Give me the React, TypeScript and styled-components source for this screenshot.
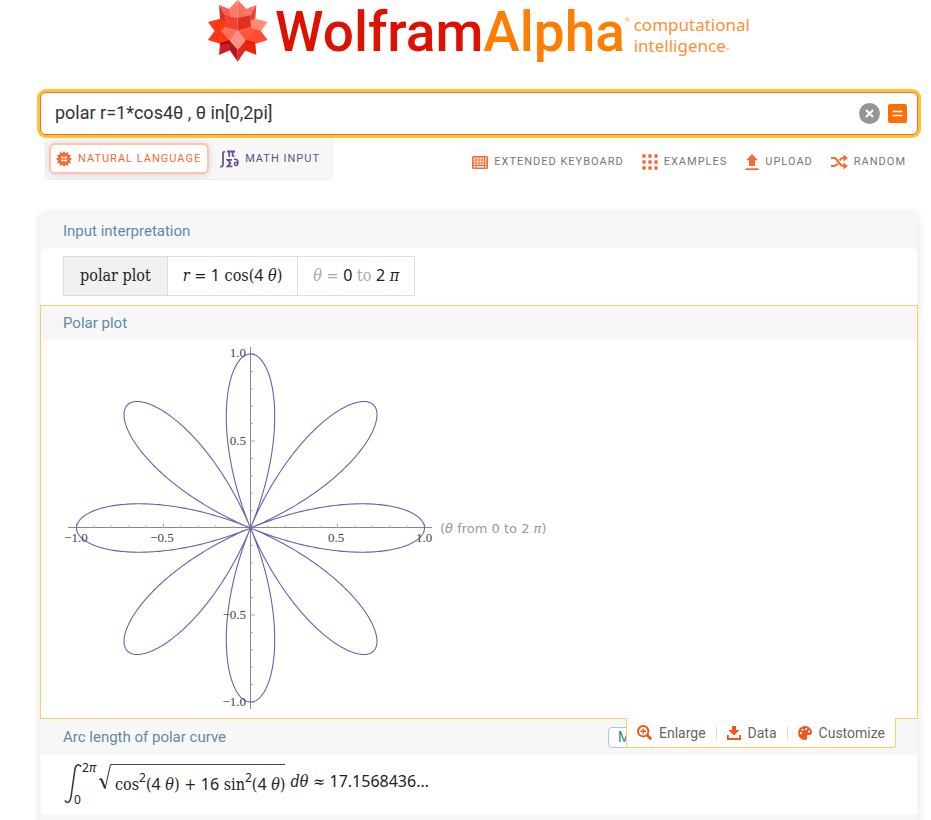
import React from 'react';
import styled, { createGlobalStyle, css } from 'styled-components';

const Global = createGlobalStyle`
  *, *::before, *::after { box-sizing: border-box; }
  body { margin: 0; background: #fff; font-family: Roboto, "Liberation Sans", sans-serif; color: #333; overflow-x: hidden; }
  button, input { font: inherit; color: inherit; }
  button { border: 0; background: none; padding: 0; margin: 0; cursor: pointer; }
  svg { display: block; flex: none; }
`;

const Page = styled.div`
  padding: 0 13px 0 40px;
`;

const Logo = styled.a`
  display: flex;
  justify-content: center;
  align-items: flex-start;
  height: 92px;
  text-decoration: none;
`;

const Wordmark = styled.span`
  display: flex;
  margin-left: 7px;
  color: #dd1100;
  font-size: 55px;
  line-height: 64px;
  font-weight: 500;
`;

const Alpha = styled.span`
  color: #ff7e00;
`;

const Registered = styled.sup`
  margin-top: 16px;
  font-size: 6px;
  line-height: 8px;
  font-weight: 400;
  color: #ff9640;
`;

const Tagline = styled.span`
  margin: 14px 0 0 4px;
  font: 17px/21px "Noto Sans", sans-serif;
  color: #ff8f33;
`;

const Trade = styled.small`
  font-size: 5px;
`;

const SearchBox = styled.form`
  display: flex;
  align-items: center;
  gap: 8px;
  height: 43px;
  padding: 0 10px 0 14px;
  border: 1px solid #f96932;
  border-radius: 6px;
  box-shadow: 0 0 0 3px #ffc230;
  background: #fff;
`;

const Query = styled.input`
  flex: 1;
  min-width: 0;
  height: 36px;
  padding: 0 0 2px;
  border: 0;
  outline: 0;
  background: transparent;
  font-size: 18px;
  color: #333;
`;

const Tools = styled.div`
  display: flex;
  justify-content: space-between;
  padding: 3px 12px 0 5px;
`;

const Modes = styled.div`
  display: flex;
  gap: 4px;
  height: 42px;
  padding: 5px 4px 6px 3px;
  background: #f7f7f7;
  border: 1px solid #efefef;
  border-top: 0;
  border-radius: 0 0 4px 4px;
`;

const label = css`
  font-size: 11px;
  line-height: 14px;
  letter-spacing: 1px;
  text-transform: uppercase;
  white-space: nowrap;
`;

const Mode = styled.button<{ $active?: boolean }>`
  ${label}
  display: flex;
  align-items: center;
  gap: 6px;
  height: 31px;
  padding: 0 6px 0 5px;
  border: 2px solid ${p => (p.$active ? '#fdc3ad' : 'transparent')};
  border-radius: 6px;
  background: ${p => (p.$active ? '#fff' : 'transparent')};
  color: ${p => (p.$active ? '#f96932' : '#5e5086')};
  box-shadow: ${p => (p.$active ? '0 1px 6px rgba(0,0,0,.15)' : 'none')};
`;

const Links = styled.nav`
  display: flex;
  align-items: center;
  gap: 18px;
  height: 48px;
`;

const ToolLink = styled.a`
  ${label}
  display: flex;
  align-items: center;
  gap: 6px;
  color: #777;
  text-decoration: none;
`;

const Results = styled.main`
  margin-top: 28px;
  border-radius: 6px;
  background: #f7f7f7;
  box-shadow: 0 0 8px rgba(0, 0, 0, 0.12);
`;

const Pod = styled.section<{ $selected?: boolean }>`
  position: relative;
  border: 1px solid ${p => (p.$selected ? '#ffcc66' : 'transparent')};
  border-width: ${p => (p.$selected ? '1px' : '0 1px')};
`;

const PodHead = styled.header`
  display: flex;
  align-items: center;
  justify-content: space-between;
  height: 34px;
  padding: 0 22px;
`;

const ResultHead = styled(PodHead)`
  height: 36px;
`;

const PodTitle = styled.h2`
  margin: 0;
  font-size: 15px;
  line-height: 20px;
  font-weight: 400;
  color: #5f8ba0;
`;

const PodBody = styled.div`
  background: #fff;
  border-radius: 6px 6px 0 0;
  padding: 8px 22px 9px;
`;

const PlotBody = styled(PodBody)`
  display: flex;
  align-items: center;
  gap: 7px;
  height: 378px;
  padding: 0 22px;
`;

const mathFont = css`
  font-family: "DejaVu Serif Condensed", "Liberation Serif", serif;
  font-size: 16px;
  line-height: 20px;
  color: #222;
  white-space: nowrap;
`;

const Interpretation = styled.table`
  ${mathFont}
  border-collapse: collapse;
`;

const Cell = styled.td<{ $shaded?: boolean }>`
  height: 39px;
  padding: 0 ${p => (p.$shaded ? '16px' : '15px')};
  border: 1px solid #ddd;
  background: ${p => (p.$shaded ? '#f1f1f1' : '#fff')};
`;

const Muted = styled.span`
  color: #aaa;
`;

const Num = styled.span`
  font-family: "Noto Sans", sans-serif;
  line-height: 1;
`;

const Caption = styled.p`
  margin: 0;
  font: 13px/20px "DejaVu Sans", sans-serif;
  color: #999;
`;

const Actions = styled.div`
  position: absolute;
  z-index: 2;
  right: 21px;
  top: 100%;
  display: flex;
  align-items: center;
  height: 30px;
  border: 1px solid #ffcc66;
  border-top: 0;
  background: #fff;
  border-radius: 0 0 3px 3px;
`;

const Action = styled.button`
  display: flex;
  align-items: center;
  gap: 7px;
  height: 14px;
  padding: 0 10px;
  font-size: 14px;
  line-height: 14px;
  color: #666;
  & + & { border-left: 1px solid #ddd; }
`;

const More = styled.button`
  width: 26px;
  height: 21px;
  margin-right: 261px;
  padding: 0 9px;
  border: 1px solid #a9cbd6;
  border-radius: 4px;
  background: #fff;
  color: #2f7f9c;
  font-size: 14px;
  line-height: 18px;
  text-align: left;
`;

const Formula = styled.div`
  ${mathFont}
  display: flex;
  height: 59px;
  background: #fff;
  padding: 8px 22px 0;
`;

const Limits = styled.span`
  display: flex;
  flex-direction: column;
  justify-content: space-between;
  height: 44px;
  margin: -1px 3px 0 -9px;
  font: 12px/12px "Noto Sans", sans-serif;
`;

const Upper = styled.span`
  margin-left: 8px;
`;

const Radicand = styled.span`
  height: 28px;
  margin: 1px 5px 0 0;
  padding: 7px 0 0 3px;
  border-top: 1px solid #444;
`;

const Rest = styled.span`
  padding-top: 9px;
`;

const Power = styled.sup`
  font: 12px/1 "Noto Sans", sans-serif;
  vertical-align: 8px;
`;

const Filler = styled.div`
  height: 36px;
`;

const BURST = Array.from({ length: 24 }, (_, i) => {
  const a = (i * Math.PI) / 12;
  const r = i % 2 ? 6 : 8;
  return `${8 + r * Math.sin(a)},${8 - r * Math.cos(a)}`;
}).join(' ');

const Spikey = () => (
  <svg width="60" height="62" viewBox="0 0 180 186" aria-hidden="true">
    <polygon fill="#ff7c6b" points="89,0 62,28 66,48 89,56" />
    <polygon fill="#fb6f5f" points="89,0 116,28 112,48 89,56" />
    <polygon fill="#f4614f" points="33,15 64,27 68,51 52,47" />
    <polygon fill="#d6302a" points="33,15 52,47 50,82 38,76 36,54" />
    <polygon fill="#ff7766" points="145,15 114,27 110,51 126,47" />
    <polygon fill="#e2443a" points="145,15 126,47 128,82 140,76 142,54" />
    <polygon fill="#ff3912" points="0,66 37,56 50,62 50,84 38,94 20,93" />
    <polygon fill="#ff8a78" points="179,66 141,56 128,62 128,84 140,94 159,93" />
    <polygon fill="#f4402f" points="52,46 89,54 89,92 49,82" />
    <polygon fill="#e2301f" points="126,46 89,54 89,92 129,82" />
    <polygon fill="#ff3613" points="0,120 20,92 40,88 70,122 36,131" />
    <polygon fill="#ff4b35" points="179,120 158,92 138,88 108,122 142,131" />
    <polygon fill="#ff7059" points="38,90 51,81 89,91 66,125" />
    <polygon fill="#ff563f" points="140,90 127,81 89,91 112,125" />
    <polygon fill="#a80d19" points="36,129 66,120 76,136 35,137" />
    <polygon fill="#d31b28" points="36,134 74,130 68,150 33,165" />
    <polygon fill="#c6141c" points="142,128 112,120 100,136 110,144" />
    <polygon fill="#ea2409" points="142,130 110,124 108,150 145,165" />
    <polygon fill="#b9131f" points="66,122 89,148 89,185 65,150" />
    <polygon fill="#df2a22" points="112,122 89,148 89,185 113,150" />
    <polygon fill="#ff9382" points="89,90 113,122 89,149 65,122" />
  </svg>
);

const Burst = () => (
  <svg width="16" height="16" viewBox="0 0 16 16" aria-hidden="true">
    <polygon points={BURST} fill="#f96932" />
    <path d="M5 6.5h6M5 9.5h6" stroke="#fff" strokeWidth="1.3" />
  </svg>
);

const MathIcon = () => (
  <svg width="19" height="18" viewBox="0 0 19 18" fill="none" stroke="#6a4f93" strokeWidth="1.8" aria-hidden="true">
    <path d="M5 2C3.400 1.400 3 2.400 3 4.400v9c0 2.400-.6 3.600-2.800 3" />
    <path d="M7 1.500h8M9.200 1.500v5.200M12.600 1.500v3.600q0 1.400 1.800.9" />
    <path d="M12 9.800H7.600l2.800 3.300-2.800 3.300H12.400" />
    <path d="M14 9.300c3-.4 4 1 4 2.900s-.9 3.400-2.300 3.400-2-3.200.2-3.400q1.200 0 1.800.8" strokeWidth="1.5" />
  </svg>
);

const Keyboard = () => (
  <svg width="16" height="13" viewBox="0 0 16 13" aria-hidden="true">
    <rect width="16" height="13" rx="1.5" fill="#f96932" />
    <path fill="#fff" d="M1.500 1.500h2v2h-2zM4.500 1.500h2v2h-2zM7.500 1.500h2v2h-2zM10.500 1.500h1.500v2h-1.500zM13 1.500h1.500v2H13zM1.500 4.500h2v2h-2zM4.500 4.500h2v2h-2zM7.500 4.500h2v2h-2zM10.500 4.500h1.500v2h-1.500zM13 4.500h1.500v2H13zM1.500 7.500h2v1.500h-2zM4.500 7.500h2v1.500h-2zM7.500 7.500h2v1.500h-2zM10.500 7.500h1.500v1.500h-1.500zM13 7.500h1.500v1.500H13zM1.500 10h2v1.500h-2zM4.500 10H12v1.500H4.500zM13 10h1.500v1.500H13z" />
  </svg>
);

const Dots = () => (
  <svg width="16" height="16" viewBox="0 0 16 16" fill="#f96932" aria-hidden="true">
    {[2, 8, 14].map(y => [2, 8, 14].map(x => <circle key={`${x}-${y}`} cx={x} cy={y} r="1.9" />))}
  </svg>
);

const Upload = () => (
  <svg width="14" height="17" viewBox="0 0 14 17" fill="#f96932" aria-hidden="true">
    <path d="M7 0l5.800 6.200H10V12H4V6.200H1.200zM.5 14.300h13v1.700H.5z" />
  </svg>
);

const Shuffle = () => (
  <svg width="17" height="14" viewBox="0 0 17 14" fill="none" stroke="#f96932" strokeWidth="2.2" aria-hidden="true">
    <path d="M0 3h3.200c3.600 0 4.600 8 9 8H14M0 11h3.200c1.400 0 2.400-1 3.200-2.400M8.600 5.400C9.600 3.800 10.600 3 12.200 3H14" />
    <path d="M12.400-.4L17 3l-4.600 3.400zM12.400 7.600L17 11l-4.600 3.400z" fill="#f96932" stroke="none" />
  </svg>
);

const Clear = () => (
  <svg width="21" height="21" viewBox="0 0 21 21" aria-hidden="true">
    <circle cx="10.5" cy="10.5" r="10.5" fill="#959595" />
    <path d="M7 7l7 7M14 7l-7 7" stroke="#fff" strokeWidth="2" />
  </svg>
);

const Equals = () => (
  <svg width="19" height="19" viewBox="0 0 19 19" aria-hidden="true">
    <rect width="19" height="19" rx="2" fill="#ff6d00" />
    <path d="M4.500 7.500h10M4.500 11.500h10" stroke="#fff" strokeWidth="1.5" />
  </svg>
);

const EnlargeIcon = () => (
  <svg width="15" height="15" viewBox="0 0 15 15" fill="none" stroke="#f0561d" aria-hidden="true">
    <circle cx="6.2" cy="6.2" r="5.2" strokeWidth="1.9" />
    <path d="M6.200 3.400v5.600M3.400 6.200h5.600" strokeWidth="1.4" />
    <path d="M10 10l4.200 4.200" strokeWidth="2.8" />
  </svg>
);

const DownloadIcon = () => (
  <svg width="14" height="14" viewBox="0 0 14 14" fill="#f0561d" aria-hidden="true">
    <path d="M5 0h4v4h3.500L7 9.400 1.500 4H5zM0 9h1.800v3h10.400V9H14v5H0z" />
  </svg>
);

const PaletteIcon = () => (
  <svg width="14" height="14" viewBox="0 0 14 14" aria-hidden="true">
    <path fill="#f0561d" d="M7 0a7 7 0 0 1 7 6.500c0 2-1.500 2.500-3 2.500-2.500 0-2 1-1.800 2.300C9.400 13 8.500 14 7 14A7 7 0 0 1 7 0z" />
    <g fill="#fff">
      <circle cx="3" cy="7.2" r="1.1" />
      <circle cx="4.6" cy="3.8" r="1.1" />
      <circle cx="8.2" cy="3" r="1.1" />
      <circle cx="11" cy="5.7" r="1.1" />
    </g>
  </svg>
);

const CX = 187.5;
const CY = 188;
const R = 174;
const rose = Array.from({ length: 1441 }, (_, i) => {
  const t = (i * Math.PI) / 720;
  const r = R * Math.cos(4 * t);
  return `${(CX + r * Math.cos(t)).toFixed(2)},${(CY - r * Math.sin(t)).toFixed(2)}`;
}).join(' ');
const ticks = Array.from({ length: 21 }, (_, i) => i - 10).filter(i => i !== 0);

const Plot = () => (
  <svg width="370" height="378" viewBox="0 0 370 378" role="img" aria-label="Polar plot of r = cos 4θ">
    <g stroke="#888" strokeWidth="1" fill="none">
      <path d={`M5 ${CY - 0.5}H369M${CX} 7V369`} />
      {ticks.map(i => {
        const l = i % 5 ? 2.5 : 4.5;
        return <path key={i} stroke="#aaa" d={`M${CX + (i * R) / 10} ${CY}v${-l}M${CX} ${CY - (i * R) / 10}h${l}`} />;
      })}
    </g>
    <polyline points={rose} fill="none" stroke="#6661b6" strokeWidth="1.1" />
    <g fontFamily="Liberation Serif, serif" fontSize="13" fill="#444">
      <g textAnchor="middle">
        <text x="13" y="202">−1.0</text>
        <text x="99" y="202">−0.5</text>
        <text x="273" y="202">0.5</text>
        <text x="361" y="202">1.0</text>
      </g>
      <g textAnchor="end">
        <text x="183" y="17">1.0</text>
        <text x="183" y="105">0.5</text>
        <text x="183" y="279">−0.5</text>
        <text x="183" y="366">−1.0</text>
      </g>
    </g>
  </svg>
);

const Integral = () => (
  <svg width="20" height="42" viewBox="0 0 20 42" fill="none" stroke="#333" strokeWidth="1.5" aria-hidden="true">
    <path d="M18 3.500C16 1 13 1 12 6L8 34c-1 6-3.500 6.500-6 4" />
    <circle cx="17.5" cy="3.2" r=".8" fill="#333" stroke="none" />
    <circle cx="2.4" cy="38" r=".8" fill="#333" stroke="none" />
  </svg>
);

const Radical = () => (
  <svg width="13" height="28" viewBox="0 0 13 28" fill="none" stroke="#333" aria-hidden="true">
    <path d="M0 17l2-1.500" strokeWidth="1" />
    <path d="M2 15.500l4 9.500" strokeWidth="2" />
    <path d="M6 26L11.500 1.500H13" strokeWidth="1" />
  </svg>
);

export default function App() {
  return (
    <>
      <Global />
      <Page>
        <Logo href="#" aria-label="WolframAlpha computational intelligence">
          <Spikey />
          <Wordmark>Wolfram<Alpha>Alpha</Alpha><Registered>®</Registered></Wordmark>
          <Tagline>computational<br />intelligence<Trade>™</Trade></Tagline>
        </Logo>
        <SearchBox onSubmit={e => e.preventDefault()}>
          <Query aria-label="Query" defaultValue="polar r=1*cos4θ , θ in[0,2pi]" />
          <button type="button" aria-label="Clear"><Clear /></button>
          <button type="submit" aria-label="Compute"><Equals /></button>
        </SearchBox>
        <Tools>
          <Modes>
            <Mode type="button" $active><Burst />Natural Language</Mode>
            <Mode type="button"><MathIcon />Math Input</Mode>
          </Modes>
          <Links>
            <ToolLink href="#"><Keyboard />Extended Keyboard</ToolLink>
            <ToolLink href="#"><Dots />Examples</ToolLink>
            <ToolLink href="#"><Upload />Upload</ToolLink>
            <ToolLink href="#"><Shuffle />Random</ToolLink>
          </Links>
        </Tools>
        <Results>
          <Pod>
            <PodHead><PodTitle>Input interpretation</PodTitle></PodHead>
            <PodBody>
              <Interpretation>
                <tbody>
                  <tr>
                    <Cell $shaded>polar plot</Cell>
                    <Cell><i>r</i> = <Num>1</Num> cos(<Num>4</Num> <i>θ</i>)</Cell>
                    <Cell><Muted><i>θ</i> =</Muted> <Num>0</Num> <Muted>to</Muted> <Num>2</Num> <i>π</i></Cell>
                  </tr>
                </tbody>
              </Interpretation>
            </PodBody>
          </Pod>
          <Pod $selected>
            <PodHead><PodTitle>Polar plot</PodTitle></PodHead>
            <PlotBody>
              <Plot />
              <Caption>(<i>θ</i> from 0 to 2 <i>π</i>)</Caption>
            </PlotBody>
            <Actions>
              <Action type="button"><EnlargeIcon />Enlarge</Action>
              <Action type="button"><DownloadIcon />Data</Action>
              <Action type="button"><PaletteIcon />Customize</Action>
            </Actions>
          </Pod>
          <Pod>
            <ResultHead>
              <PodTitle>Arc length of polar curve</PodTitle>
              <More type="button" aria-label="More digits">M</More>
            </ResultHead>
            <Formula>
              <Integral />
              <Limits><Upper>2<i>π</i></Upper><span>0</span></Limits>
              <Radical />
              <Radicand>cos<Power>2</Power>(<Num>4</Num> <i>θ</i>) + <Num>16</Num> sin<Power>2</Power>(<Num>4</Num> <i>θ</i>)</Radicand>
              <Rest><i>dθ</i> ≈ <Num>17.1568436…</Num></Rest>
            </Formula>
          </Pod>
          <Filler />
        </Results>
      </Page>
    </>
  );
}
